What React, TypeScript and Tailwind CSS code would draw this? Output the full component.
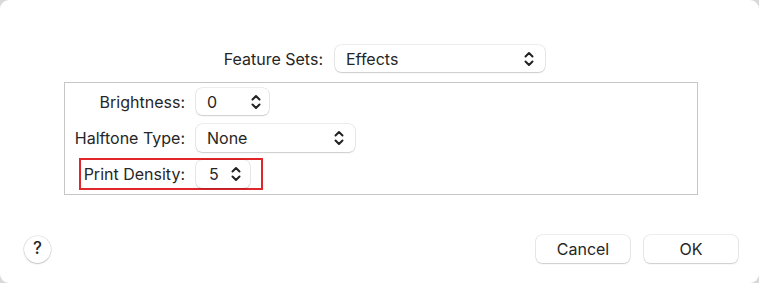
import React from 'react';

const Chevrons = () => (
  <svg width="10" height="16" viewBox="0 0 10 16" fill="none" className="shrink-0">
    <path d="M1.5 5.5 L5 2 L8.5 5.5" stroke="#222" strokeWidth="2" strokeLinecap="round" strokeLinejoin="round" />
    <path d="M1.5 10.5 L5 14 L8.5 10.5" stroke="#222" strokeWidth="2" strokeLinecap="round" strokeLinejoin="round" />
  </svg>
);

const control =
  'flex items-center justify-between bg-white rounded-[6px] shadow-[0_0_0_0.5px_rgba(0,0,0,0.14),0_1px_1.5px_rgba(0,0,0,0.14)]';

const Popup = ({ value, className }: { value: string; className: string }) => (
  <div className={`${control} ${className}`}>
    <span>{value}</span>
    <Chevrons />
  </div>
);

const Button = ({ children, className }: { children: React.ReactNode; className: string }) => (
  <button className={`${control} justify-center! h-[28px] ${className}`}>{children}</button>
);

export default function App() {
  return (
    <div className="w-[759px] h-[283px] bg-[#d9d9d9] font-['Inter',sans-serif] text-[16px] text-[#262626]">
      <div className="w-full h-full bg-white rounded-[9px] flex flex-col">
        <div className="flex items-center pt-[45px]">
          <div className="w-[323px] text-right">Feature Sets:</div>
          <Popup value="Effects" className="ml-[12px] w-[210px] h-[27px] pl-[11px] pr-[11px]" />
        </div>

        <div className="mt-[10px] ml-[64px] w-[634px] h-[113px] border border-[#c6c6c6] flex flex-col pt-[5px]">
          <div className="flex items-center">
            <div className="w-[120px] text-right">Brightness:</div>
            <Popup value="0" className="ml-[11px] w-[73px] h-[27px] pl-[11px] pr-[8px]" />
          </div>
          <div className="flex items-center mt-[9px]">
            <div className="w-[120px] text-right">Halftone Type:</div>
            <Popup value="None" className="ml-[11px] w-[159px] h-[28px] pl-[11px] pr-[11px]" />
          </div>
          <div className="flex items-center mt-[6px] ml-[14px] w-[184px] h-[32px] border-2 border-[#e0262b]">
            <div className="w-[104px] text-right">Print Density:</div>
            <Popup value="5" className="ml-[11px] w-[54px] h-[28px] pl-[13px] pr-[9px]" />
          </div>
        </div>

        <div className="flex items-center mt-[40px] pl-[24px] pr-[21px]">
          <div className="w-[27px] h-[27px] rounded-full bg-white flex items-center justify-center text-[17px] font-medium shadow-[0_0_0_0.5px_rgba(0,0,0,0.14),0_1px_1.5px_rgba(0,0,0,0.18)]">
            ?
          </div>
          <div className="flex-1" />
          <Button className="w-[94px]">Cancel</Button>
          <Button className="w-[94px] ml-[14px]">OK</Button>
        </div>
      </div>
    </div>
  );
}
